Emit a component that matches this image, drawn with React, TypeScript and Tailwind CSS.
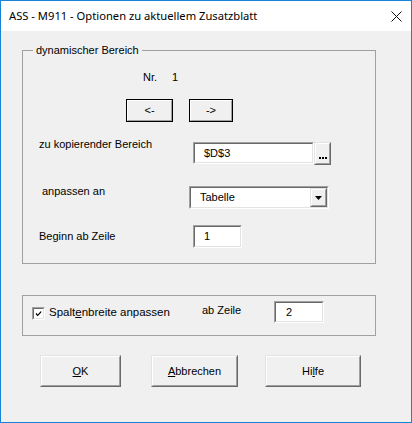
import type { ReactNode } from "react";

const ui = "font-['Liberation_Sans',Arial,sans-serif] text-[11px] leading-[13px] text-black";

// classic win32 3d borders, two nested 1px frames
const Raised = ({ outer = "border-t-[#e3e3e3] border-l-[#e3e3e3] border-r-[#696969] border-b-[#696969]", className = "", children }: { outer?: string; className?: string; children?: ReactNode }) => (
  <div className={`border ${outer} ${className}`}>
    <div className="flex h-full w-full items-center justify-center border border-t-white border-l-white border-r-[#a0a0a0] border-b-[#a0a0a0] bg-[#f0f0f0]">
      {children}
    </div>
  </div>
);

const Sunken = ({ className = "", children }: { className?: string; children?: ReactNode }) => (
  <div className={`border border-t-[#a0a0a0] border-l-[#a0a0a0] border-r-white border-b-white ${className}`}>
    <div className="flex h-full w-full items-center border border-t-[#696969] border-l-[#696969] border-r-[#e3e3e3] border-b-[#e3e3e3] bg-white">
      {children}
    </div>
  </div>
);

const ButtonRow = [
  { label: "OK", key: "O", rest: "K", pre: "", w: "w-[81px]" },
  { label: "Abbrechen", key: "A", rest: "bbrechen", pre: "", w: "w-[87px]" },
  { label: "Hilfe", key: "l", rest: "fe", pre: "Hi", w: "w-[96px]" },
];

export default function App() {
  return (
    <div className={`flex h-[423px] w-[412px] flex-col border border-[#1883d7] bg-[#f0f0f0] ${ui}`}>
      {/* Title bar */}
      <div className="flex h-[30px] shrink-0 items-center justify-between bg-white pl-[8px] pr-[9px]">
        <span className="font-['Noto_Sans',sans-serif] text-[11.2px] leading-[16px] text-black">
          ASS - M911 - Optionen zu aktuellem Zusatzblatt
        </span>
        <svg width="11" height="11" viewBox="0 0 11 11">
          <path d="M0.5 0.5 L10.5 10.5 M10.5 0.5 L0.5 10.5" stroke="#111" strokeWidth="1" />
        </svg>
      </div>

      {/* Group: dynamischer Bereich */}
      <div className="ml-[21px] mt-[19px] flex w-[354px] flex-col border border-[#a0a0a0] pb-[15px]">
        <div className="-mt-[7px] ml-[10px] self-start bg-[#f0f0f0] px-[3px]">dynamischer Bereich</div>

        <div className="ml-[120px] mt-[14px] flex h-[13px]">
          <span className="w-[29px]">Nr.</span>
          <span>1</span>
        </div>

        <div className="ml-[103px] mt-[15px] flex gap-[16px]">
          <Raised outer="border-black" className="h-[23px] w-[47px]">&lt;-</Raised>
          <Raised outer="border-black" className="h-[23px] w-[44px]">-&gt;</Raised>
        </div>

        <div className="mt-[16px] flex items-start">
          <span className="ml-[16px] w-[154px]">zu kopierender Bereich</span>
          <div className="mt-[4px] flex">
            <Sunken className="h-[22px] w-[121px]">
              <span className="pl-[9px]">$D$3</span>
            </Sunken>
            <Raised className="h-[23px] w-[17px]">
              <div className="mt-[9px] flex gap-[1px]">
                <span className="h-[2px] w-[2px] bg-black" />
                <span className="h-[2px] w-[2px] bg-black" />
                <span className="h-[2px] w-[2px] bg-black" />
              </div>
            </Raised>
          </div>
        </div>

        <div className="mt-[20px] flex items-start">
          <span className="ml-[19px] w-[147px]">anpassen an</span>
          <Sunken className="mt-[1px] h-[23px] w-[140px]">
            <span className="flex-1 pl-[9px]">Tabelle</span>
            <Raised className="h-full w-[17px]">
              <svg width="7" height="4" viewBox="0 0 7 4">
                <path d="M0 0 H7 L3.5 4 Z" fill="#000" />
              </svg>
            </Raised>
          </Sunken>
        </div>

        <div className="mt-[16px] flex items-start">
          <span className="ml-[16px] mt-[5px] w-[154px]">Beginn ab Zeile</span>
          <Sunken className="h-[23px] w-[49px]">
            <span className="pl-[9px]">1</span>
          </Sunken>
        </div>
      </div>

      {/* Group: Spaltenbreite */}
      <div className="ml-[21px] mt-[31px] flex h-[41px] w-[354px] items-start border border-[#a0a0a0]">
        <Sunken className="ml-[9px] mt-[11px] h-[13px] w-[13px]">
          <svg width="9" height="9" viewBox="0 0 9 9" className="ml-[1px]">
            <path d="M1 3.5 L3 5.5 L7 1.5 L7 3.5 L3 7.5 L1 5.5 Z" fill="#000" />
          </svg>
        </Sunken>
        <span className="ml-[4px] mt-[10px] w-[153px] text-[11.5px]">
          Spalt<u className="underline-offset-[1px]">e</u>nbreite anpassen
        </span>
        <span className="mt-[8px] w-[72px]">ab Zeile</span>
        <Sunken className="mt-[5px] h-[22px] w-[50px]">
          <span className="pl-[10px]">2</span>
        </Sunken>
      </div>

      {/* Buttons */}
      <div className="ml-[39px] mt-[19px] flex">
        {ButtonRow.map((b, i) => (
          <Raised key={b.label} className={`h-[32px] ${b.w} ${i === 1 ? "ml-[30px]" : i === 2 ? "ml-[27px]" : ""}`}>
            <span>
              {b.pre}
              <u className="underline-offset-[1px]">{b.key}</u>
              {b.rest}
            </span>
          </Raised>
        ))}
      </div>
    </div>
  );
}
